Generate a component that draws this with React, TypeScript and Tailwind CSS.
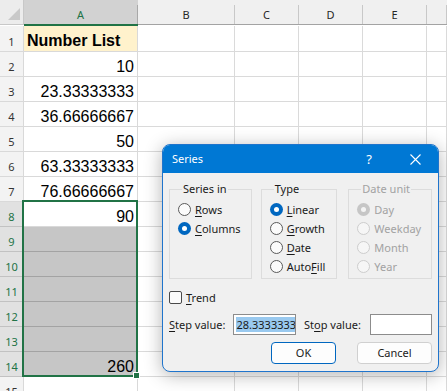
import React from "react";

type Row = { n: number; v?: string; bold?: boolean; sel?: boolean; active?: boolean };

const data: Row[] = [
  { n: 1, v: "Number List", bold: true },
  { n: 2, v: "10" },
  { n: 3, v: "23.33333333" },
  { n: 4, v: "36.66666667" },
  { n: 5, v: "50" },
  { n: 6, v: "63.33333333" },
  { n: 7, v: "76.66666667" },
  { n: 8, v: "90", sel: true, active: true },
  { n: 9, sel: true },
  { n: 10, sel: true },
  { n: 11, sel: true },
  { n: 12, sel: true },
  { n: 13, sel: true },
  { n: 14, v: "260", sel: true },
  { n: 15 },
];

function Radio({ checked, disabled }: { checked?: boolean; disabled?: boolean }) {
  if (disabled) {
    return checked ? (
      <span className="w-[13px] h-[13px] shrink-0 rounded-full bg-[#c6c6c6] flex items-center justify-center">
        <span className="w-[5px] h-[5px] rounded-full bg-[#f4f4f4]" />
      </span>
    ) : (
      <span className="w-[13px] h-[13px] shrink-0 rounded-full border border-[#cdcdcd] bg-[#f6f6f6]" />
    );
  }
  return checked ? (
    <span className="w-[13px] h-[13px] shrink-0 rounded-full bg-[#0067c0] flex items-center justify-center">
      <span className="w-[5px] h-[5px] rounded-full bg-white" />
    </span>
  ) : (
    <span className="w-[13px] h-[13px] shrink-0 rounded-full border border-[#5a5a5a] bg-[#fbfbfb]" />
  );
}

function Opt({ children, checked, disabled }: { children: React.ReactNode; checked?: boolean; disabled?: boolean }) {
  return (
    <div className={`h-[19px] flex items-center gap-[4px] ${disabled ? "text-[#a2a2a2]" : "text-[#1a1a1a]"}`}>
      <Radio checked={checked} disabled={disabled} />
      <span className="leading-[14px]">{children}</span>
    </div>
  );
}

function U({ children }: { children: React.ReactNode }) {
  return <span className="underline underline-offset-[2px]">{children}</span>;
}

const sideCols = ["w-[97px]", "w-[64px]", "w-[64px]", "w-[64px]", "flex-1"];
const sideLetters = ["B", "C", "D", "E", ""];

export default function App() {
  return (
    <div className="relative w-[447px] h-[391px] overflow-hidden bg-white font-['Noto_Sans',sans-serif]">
      <div className="flex flex-col">
        {/* column headers */}
        <div className="flex h-[26px] shrink-0 items-start bg-white">
          <div className="relative w-[24px] h-[25px] bg-[#ececec] border-r border-b border-[#c8c8c8]">
            <svg className="absolute left-0 top-0" width="24" height="25" viewBox="0 0 24 25">
              <polygon points="20,8 20,20 8,20" fill="#c9c9c9" />
            </svg>
          </div>
          <div className="w-[114px] h-[26px] bg-[#d2d2d2] border-b-2 border-[#217346] flex flex-col">
            <div className="mt-[5px] h-[19px] border-r border-[#a8a8a8] flex items-center justify-center text-[11px] leading-[14px] text-[#217346]">
              A
            </div>
          </div>
          {sideCols.map((w, i) => (
            <div key={i} className={`${w} h-[25px] bg-[#f0f0f0] border-b border-[#a3a3a3] flex flex-col`}>
              <div className="mt-[5px] h-[19px] border-r border-[#c8c8c8] flex items-center justify-center text-[11px] leading-[14px] text-[#262626]">
                {sideLetters[i]}
              </div>
            </div>
          ))}
        </div>

        {/* rows */}
        {data.map((r) => (
          <div key={r.n} className={`flex shrink-0 ${r.n === 1 ? "h-[26px]" : "h-[25px]"}`}>
            <div
              className={`w-[24px] flex items-end justify-center pb-[2px] border-r border-b text-[11px] leading-[14px] ${
                r.sel ? "bg-[#e1e1e1] text-[#217346] border-[#c2c2c2]" : "bg-[#f3f3f3] text-[#333333] border-[#d9d9d9]"
              }`}
            >
              {r.n}
            </div>
            <div
              className={`w-[114px] flex items-end border-r border-b text-[16px] leading-[18px] font-['Liberation_Sans',Arial,sans-serif] text-black ${
                r.n === 1
                  ? "bg-[#fff2cc] justify-start pl-[3px] pb-[1px] font-bold border-[#d9d9d9]"
                  : r.sel && !r.active
                  ? "bg-[#c6c6c6] justify-end pr-[3px] border-[#a3a3a3]"
                  : "bg-white justify-end pr-[3px] border-[#d9d9d9]"
              }`}
            >
              {r.v}
            </div>
            {sideCols.map((w, i) => (
              <div key={i} className={`${w} bg-white border-r border-b border-[#dadada]`} />
            ))}
          </div>
        ))}
      </div>

      {/* selection border */}
      <div className="absolute left-[22px] top-[200px] w-[116px] h-[177px] border-2 border-[#217346] pointer-events-none" />
      <div className="absolute left-[133px] top-[372px] w-[7px] h-[7px] bg-[#217346] border border-white pointer-events-none" />

      {/* dialog */}
      <div className="absolute left-[162px] top-[144px] w-[277px] rounded-[8px] border border-[#1f74cc] bg-[#f0f0f0] shadow-[0_3px_18px_rgba(0,0,0,0.3)] overflow-hidden text-[11px] text-[#1a1a1a]">
        <div className="h-[28px] bg-[#0078d4] flex items-center text-white">
          <span className="flex-1 pl-[9px] leading-[14px]">Series</span>
          <div className="w-[46px] h-full flex items-center justify-center text-[13px] leading-[14px]">?</div>
          <div className="w-[46px] h-full flex items-center justify-center">
            <svg width="11" height="11" viewBox="0 0 11 11">
              <path d="M0.5 0.5 L10.5 10.5 M10.5 0.5 L0.5 10.5" stroke="white" strokeWidth="1.1" fill="none" />
            </svg>
          </div>
        </div>

        <div className="px-[6px] pt-[8px] pb-[7px] flex flex-col">
          <div className="flex">
            <fieldset className="w-[83px] h-[98px] border border-[#dcdcdc] pl-[8px] pt-[3px]">
              <legend className="ml-[4px] px-[1px] leading-[16px]">Series in</legend>
              <Opt>
                <U>R</U>ows
              </Opt>
              <Opt checked>
                <U>C</U>olumns
              </Opt>
            </fieldset>
            <fieldset className="ml-[9px] w-[77px] h-[98px] border border-[#dcdcdc] pl-[8px] pt-[3px]">
              <legend className="ml-[4px] px-[1px] leading-[16px]">Type</legend>
              <Opt checked>
                <U>L</U>inear
              </Opt>
              <Opt>
                <U>G</U>rowth
              </Opt>
              <Opt>
                <U>D</U>ate
              </Opt>
              <Opt>
                Auto<U>F</U>ill
              </Opt>
            </fieldset>
            <fieldset className="ml-[11px] w-[84px] h-[98px] border border-[#dcdcdc] pl-[8px] pt-[3px]">
              <legend className="ml-[4px] px-[1px] leading-[16px] text-[#a2a2a2]">Date unit</legend>
              <Opt checked disabled>
                Day
              </Opt>
              <Opt disabled>Weekday</Opt>
              <Opt disabled>Month</Opt>
              <Opt disabled>Year</Opt>
            </fieldset>
          </div>

          <div className="mt-[9px] h-[19px] flex items-center gap-[4px]">
            <span className="w-[13px] h-[13px] rounded-[2px] border border-[#4a4a4a] bg-[#fbfbfb]" />
            <span className="leading-[14px]">
              <U>T</U>rend
            </span>
          </div>

          <div className="mt-[7px] h-[21px] flex items-center">
            <span className="w-[65px] leading-[14px]">
              <U>S</U>tep value:
            </span>
            <div className="w-[63px] h-[21px] bg-white border border-[#8c8c8c] flex items-center px-[2px] overflow-hidden">
              <span className="bg-[#99c9ef] leading-[15px] whitespace-nowrap">28.3333333</span>
            </div>
            <span className="ml-[8px] w-[66px] leading-[14px]">
              St<U>o</U>p value:
            </span>
            <div className="w-[63px] h-[21px] bg-white border border-[#8c8c8c]" />
          </div>

          <div className="mt-[7px] h-[22px] flex justify-end gap-[21px] pr-[-1px]">
            <div className="w-[65px] h-[22px] rounded-[4px] bg-[#fdfdfd] border border-[#0067c0] flex items-center justify-center leading-[14px]">
              OK
            </div>
            <div className="w-[75px] h-[22px] rounded-[4px] bg-[#fdfdfd] border border-[#d0d0d0] flex items-center justify-center leading-[14px]">
              Cancel
            </div>
          </div>
        </div>
      </div>
    </div>
  );
}
